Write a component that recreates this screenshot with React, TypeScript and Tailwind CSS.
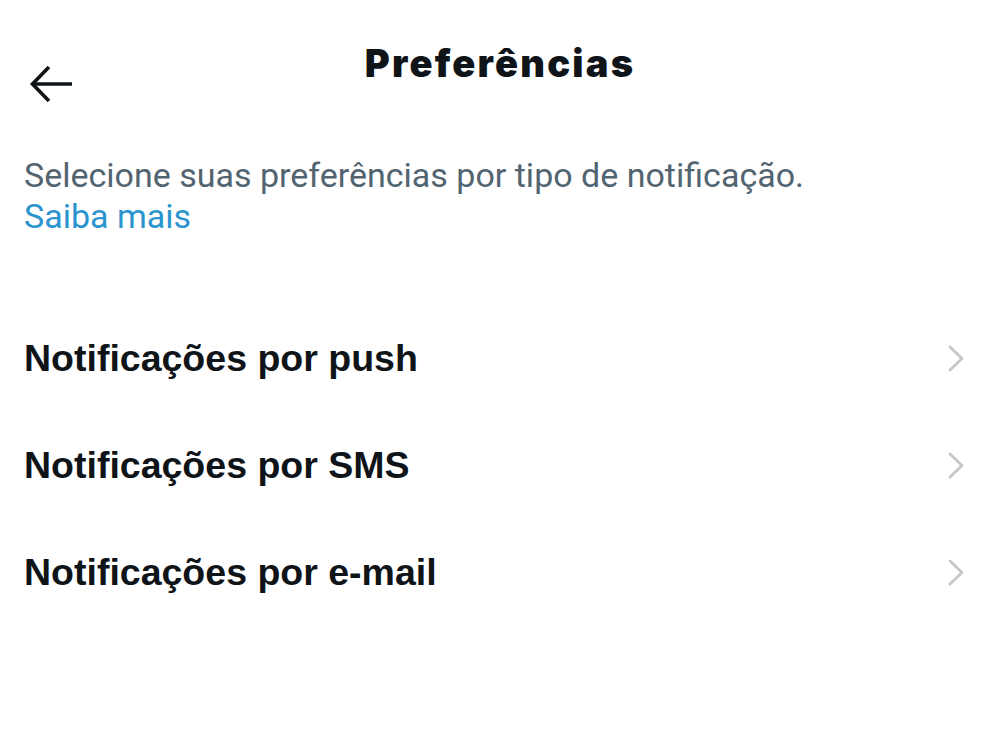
const ITEMS = ["Notificações por push", "Notificações por SMS", "Notificações por e-mail"];

function BackArrow() {
  return (
    <svg width="44" height="38" viewBox="0 0 44 38" fill="none" stroke="#0f1419" strokeWidth="3.6" strokeLinecap="butt" strokeLinejoin="miter">
      <path d="M43 19H4" />
      <path d="M20 2L3.5 19L20 36" />
    </svg>
  );
}

function Chevron() {
  return (
    <svg width="16" height="27" viewBox="0 0 16 27" fill="none" stroke="#c4c7ca" strokeWidth="2.8" strokeLinecap="round" strokeLinejoin="round">
      <path d="M2 2L14 13.5L2 25" />
    </svg>
  );
}

export default function App() {
  return (
    <main className="min-h-screen w-full bg-white text-[#0f1419]">
      <header className="grid grid-cols-[1fr_auto_1fr] items-start pt-[44px]">
        <div className="pl-[29px] pt-[21px]">
          <BackArrow />
        </div>
        <h1 className="font-['Inter','Liberation_Sans',sans-serif] text-[38px] font-black leading-[38px] tracking-[2.2px]">
          Preferências
        </h1>
        <div />
      </header>

      <section className="mt-[52px] px-6 font-['Roboto','Noto_Sans',sans-serif] text-[34px] leading-[41px]">
        <p className="text-[#536471]">Selecione suas preferências por tipo de notificação.</p>
        <a href="#" className="text-[#2a94cf]">Saiba mais</a>
      </section>

      <ul className="mt-[68px] font-['Liberation_Sans',Arial,sans-serif]">
        {ITEMS.map((item) => (
          <li key={item} className="flex h-[107px] items-center justify-between pl-6 pr-[36px]">
            <span className="text-[37.5px] font-bold leading-[37px]">{item}</span>
            <Chevron />
          </li>
        ))}
      </ul>
    </main>
  );
}
